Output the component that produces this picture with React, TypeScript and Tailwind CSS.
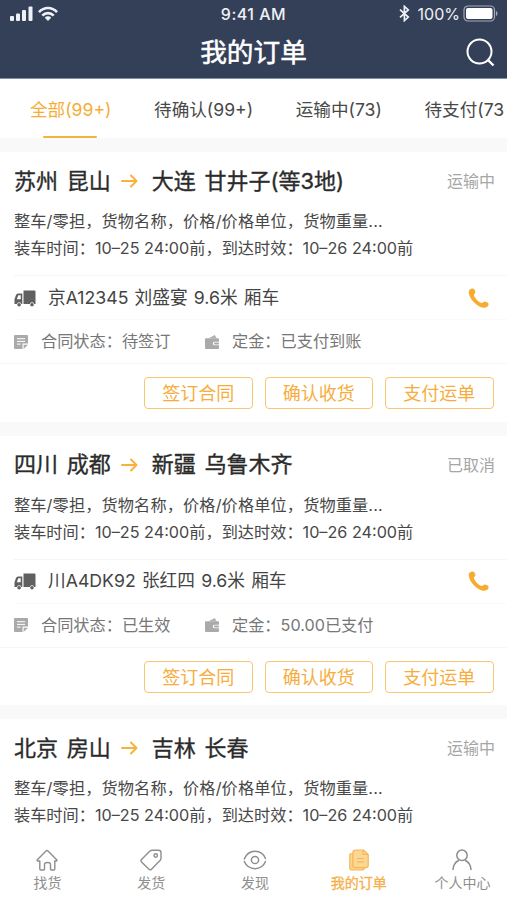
import React from "react";

type Order = {
  from: string;
  to: string;
  status: string;
  truck?: string;
  contract?: string;
  deposit?: string;
};

const filters = ["全部(99+)", "待确认(99+)", "运输中(73)", "待支付(73"];

const orders: Order[] = [
  {
    from: "苏州 昆山",
    to: "大连 甘井子(等3地)",
    status: "运输中",
    truck: "京A12345 刘盛宴 9.6米 厢车",
    contract: "待签订",
    deposit: "已支付到账",
  },
  {
    from: "四川 成都",
    to: "新疆 乌鲁木齐",
    status: "已取消",
    truck: "川A4DK92 张红四 9.6米 厢车",
    contract: "已生效",
    deposit: "50.00已支付",
  },
  {
    from: "北京 房山",
    to: "吉林 长春",
    status: "运输中",
  },
];

const actions = ["签订合同", "确认收货", "支付运单"];

const StatusBar: React.FC = () => (
  <div className="grid h-[27px] grid-cols-3 items-center px-[9px] text-[#eef1f6]">
    <div className="flex items-center gap-[4px]">
      <svg width="25" height="17" viewBox="0 0 25 17" fill="currentColor">
        <rect x="1" y="11" width="4" height="5" rx="1" />
        <rect x="7" y="8.5" width="4" height="7.5" rx="1" />
        <rect x="13" y="5" width="4" height="11" rx="1" />
        <rect x="19.5" y="1.5" width="4" height="14.5" rx="1" />
      </svg>
      <svg width="20" height="16" viewBox="0 0 20 16" fill="none" stroke="currentColor" strokeWidth="2.6">
        <path d="M1 6.2C6 .6 14 .6 19 6.2" />
        <path d="M4.3 9.7C7.5 6.2 12.5 6.2 15.7 9.7" />
        <path d="M10 15 6.8 11.7c1.8-1.9 4.6-1.9 6.4 0z" fill="currentColor" stroke="none" />
      </svg>
    </div>
    <span className="text-center text-[16px] font-medium tracking-[0.5px] whitespace-nowrap">9:41 AM</span>
    <div className="flex items-center justify-end">
      <svg width="11" height="17" viewBox="0 0 11 17" fill="none" stroke="currentColor" strokeWidth="1.700">
        <path d="M1 4.7 9.3 12 5.4 15.6V1.4L9.3 5 1 12.3" />
      </svg>
      <span className="ml-[8px] text-[16px]">100%</span>
      <svg className="mr-[-1px] ml-[3px]" width="36" height="17" viewBox="0 0 36 17">
        <rect x="1" y="1" width="30.5" height="15" rx="4" fill="none" stroke="#a3abb9" strokeWidth="1.2" />
        <rect x="3" y="3" width="26.5" height="11" rx="2" fill="#fff" />
        <path d="M33 6v5c2-.7 2-4.300 0-5z" fill="#a3abb9" />
      </svg>
    </div>
  </div>
);

const TruckIcon = () => (
  <svg width="22" height="17" viewBox="0 0 22 17" fill="#606060">
    <path d="M9.5 .5H20.5Q21.500 .5 21.500 1.500V14H20.200A2.300 2.300 0 0 0 15.800 14H9.500Z" />
    <path
      fillRule="evenodd"
      d="M8.300 3.500V14H7.400A2.300 2.300 0 0 0 2.900 14H.5V9.300L2 5Q2.500 3.500 4 3.500ZM6.700 5.200H4.300L2.800 9.200H6.700Z"
    />
    <circle cx="5.100" cy="14.800" r="1.800" />
    <circle cx="18" cy="14.800" r="1.800" />
  </svg>
);

const NoteIcon = () => (
  <svg width="14" height="14" viewBox="0 0 14 14">
    <path d="M1 0H13Q14 0 14 1V8.500H8.500V14H1Q0 14 0 13V1Q0 0 1 0Z" fill="#aaa" />
    <path d="M9.600 9.700H14L9.600 14Z" fill="#aaa" />
    <path d="M3 3.700H11M3 6.400H11M3 9.100H6.500" stroke="#fff" strokeWidth="1" />
  </svg>
);

const WalletIcon = () => (
  <svg width="14" height="14" viewBox="0 0 14 14">
    <path d="M3.500 3.200 9.800 0 11.600 3.200Z" fill="#b2b2b2" />
    <path d="M1 3.300H13Q14 3.300 14 4.300V6.700H9.500a1.700 1.700 0 0 0 0 3.500H14V13Q14 14 13 14H1Q0 14 0 13V4.300Q0 3.300 1 3.300Z" fill="#aaa" />
    <rect x="9" y="7.500" width="5" height="1.900" rx=".9" fill="#aaa" />
  </svg>
);

const PhoneIcon = () => (
  <svg width="21" height="21" viewBox="0 0 21 21" fill="#f5ac2f">
    <path d="M1.300 2.100C2.700.3 5.200-.2 6.300 1.300L7.300 3.400C7.900 5 6 5.600 5.900 6.900 6.500 9.800 10.300 13.800 13.500 14.900 14.800 15.200 15.600 13.500 17 13.600L19.600 14.600C21.300 15.700 20.700 17.900 18.900 19.100 15.800 21.100 10.600 18.800 6.700 15.100 2.700 11.200-.6 5.200 1.300 2.100Z" />
  </svg>
);

const OrderCard: React.FC<{ order: Order }> = ({ order }) => (
  <div className="shrink-0 bg-white">
    <div className="flex h-[56px] items-center pt-[2px] pr-[12px] pl-[14px]">
      <span className="text-[22px] text-[#2b2b2b] [-webkit-text-stroke:0.350px_#2b2b2b] [word-spacing:2.500px]">{order.from}</span>
      <svg className="mr-[13.500px] ml-[10.500px]" width="17" height="14" viewBox="0 0 17 14" fill="none" stroke="#f8b13c" strokeWidth="2" strokeLinecap="round" strokeLinejoin="round">
        <path d="M1 7H15.500M10 1.500 15.500 7 10 12.500" />
      </svg>
      <span className="text-[22px] text-[#2b2b2b] [-webkit-text-stroke:0.350px_#2b2b2b] [word-spacing:2.500px]">{order.to}</span>
      <span className="ml-auto text-[16px] text-[#a6a6a6]">{order.status}</span>
    </div>
    <div className="h-[67px] pl-[14px] text-[16.200px] leading-[27px] whitespace-nowrap text-[#484848]">
      <p className="tracking-[0.120px]">整车/零担，货物名称，价格/价格单位，货物重量...</p>
      <p>装车时间：10–25 24:00前，到达时效：10–26 24:00前</p>
    </div>
    {order.truck && (
      <>
        <div className="ml-[14px] flex h-[44px] items-center border-t border-[#f5f5f5] pt-px pr-[18px]">
          <TruckIcon />
          <span className="ml-[12px] text-[17.700px] text-[#444] [word-spacing:1.200px]">{order.truck}</span>
          <span className="ml-auto">
            <PhoneIcon />
          </span>
        </div>
        <div className="ml-[14px] flex h-[44px] items-center border-t border-[#fafafa] text-[16.200px] text-[#777]">
          <NoteIcon />
          <span className="ml-[13px] w-[164px]">合同状态：{order.contract}</span>
          <WalletIcon />
          <span className="ml-[13px]">定金：{order.deposit}</span>
        </div>
        <div className="flex h-[58.700px] justify-end gap-[12px] border-t border-[#f5f5f5] pt-[13px] pr-[13.500px]">
          {actions.map((action) => (
            <button
              key={action}
              className="h-[32px] w-[108.500px] rounded-[4px] border border-[#f9c570] text-[18px] leading-[31px] text-[#f6ad3d]">
              {action}
            </button>
          ))}
        </div>
      </>
    )}
  </div>
);

const HomeIcon = () => (
  <svg width="22" height="22" viewBox="0 0 22 22" fill="none" stroke="currentColor" strokeWidth="1.400" strokeLinejoin="round" strokeLinecap="round">
    <path d="M3.800 12H1.500Q.6 11.500 1.300 10.700L10 1.900Q11 1 12 1.900L20.700 10.700Q21.400 11.500 20.500 12H18.800V20Q18.800 21 17.800 21H15.500Q14.500 21 14.500 20V15.500Q14.500 13.500 11.500 13.500T8.500 15.500V20Q8.500 21 7.500 21H4.800Q3.800 21 3.800 20Z" />
  </svg>
);

const TagIcon = () => (
  <svg width="22" height="22" viewBox="0 0 22 22" fill="none" stroke="currentColor" strokeWidth="1.400" strokeLinejoin="round">
    <path d="M12.500 1.200H18.500Q21 1.200 21 3.800V9Q21 10.500 20 11.600L11.500 20.200Q10.300 21.400 9 20.200L1.500 13Q.4 11.800 1.500 10.500L9.700 2.300Q11 1.200 12.500 1.200Z" />
    <circle cx="15.700" cy="6.500" r="1.700" />
  </svg>
);

const EyeIcon = () => (
  <svg width="24" height="22" viewBox="0 0 24 22" fill="none" stroke="currentColor" strokeWidth="1.500" strokeLinecap="round">
    <path d="M1.300 10C5.500-.3 18.500-.3 22.500 9.500M22.500 12.500C18.500 22 5.500 22 1.300 12.500" />
    <circle cx="12" cy="11" r="3.600" />
  </svg>
);

const OrdersIcon = () => (
  <svg width="20" height="22" viewBox="0 0 20 22" fill="#fbd694" stroke="#f5b653" strokeWidth="1.200" strokeLinejoin="round">
    <path d="M3 4.500H2.500Q.8 4.500.8 6.200V19.300Q.8 21 2.500 21H13Q15.500 21 15.500 18.500" />
    <path d="M7 1H14.500L19.200 5.500V16.500Q19.200 18.700 17 18.700H6Q3.800 18.700 3.800 16.500V4Q3.800 1 7 1Z" />
    <path d="M14 1.500V5.500H19M8 9.500H15M8 13H15" fill="none" />
  </svg>
);

const UserIcon = () => (
  <svg width="20" height="22" viewBox="0 0 20 22" fill="none" stroke="currentColor" strokeWidth="1.500" strokeLinecap="round">
    <circle cx="10" cy="6.300" r="5.200" />
    <path d="M1 20.500Q1.500 14 6.500 11.500M13.500 11.500Q18.500 14 19 20.500" />
  </svg>
);

const navItems = [
  { label: "找货", icon: HomeIcon },
  { label: "发货", icon: TagIcon },
  { label: "发现", icon: EyeIcon },
  { label: "我的订单", icon: OrdersIcon, active: true },
  { label: "个人中心", icon: UserIcon },
];

const App: React.FC = () => {
  return (
    <div className="flex h-[900px] w-[507px] flex-col overflow-hidden bg-[#f9f9f9] font-[Inter,'Noto_Sans_CJK_SC',sans-serif]">
      <header className="h-[79px] shrink-0 border-b border-[#7f90a5] bg-[#344057] text-white">
        <StatusBar />
        <div className="grid h-[50px] grid-cols-[1fr_auto_1fr] items-center">
          <span />
          <h1 className="pt-px text-[26.700px] [-webkit-text-stroke:0.500px_#fff]">我的订单</h1>
          <svg className="mr-[12px] justify-self-end" width="29" height="29" viewBox="0 0 29 29" fill="none" stroke="#fff" strokeWidth="2">
            <circle cx="13.500" cy="13.500" r="12" />
            <path d="M22 22 27.500 27.500" strokeWidth="2.400" />
          </svg>
        </div>
      </header>

      <nav className="flex h-[59px] shrink-0 gap-[42.600px] bg-white pl-[30px] text-[17.600px] whitespace-nowrap text-[#484848]">
        {filters.map((filter, index) => (
          <div key={filter} className={index === 0 ? "flex shrink-0 flex-col items-center text-[#f6ad36]" : "shrink-0"}>
            <span className="block h-[56.500px] leading-[61px]">{filter}</span>
            {index === 0 && <span className="mr-[1px] h-[2.500px] w-[54px] shrink-0 rounded-full bg-[#f4b23f]" />}
          </div>
        ))}
      </nav>

      <main className="flex min-h-0 flex-1 flex-col gap-[14px] overflow-hidden pt-[14px]">
        {orders.map((order) => (
          <OrderCard key={order.from} order={order} />
        ))}
      </main>

      <footer className="h-[62px] shrink-0 bg-white">
        <div className="ml-[-4.400px] grid w-[518.750px] grid-cols-5 pt-[11px]">
          {navItems.map(({ label, icon: Icon, active }) => (
            <div key={label} className={active ? "flex flex-col items-center text-[#f5b04a]" : "flex flex-col items-center text-[#8e8e8e]"}>
              <Icon />
              <span className={active ? "mt-[1px] text-[14px] leading-[22px] [-webkit-text-stroke:0.300px_#f5b04a]" : "mt-[1px] text-[14px] leading-[22px]"}>{label}</span>
            </div>
          ))}
        </div>
      </footer>
    </div>
  );
};

export default App;
